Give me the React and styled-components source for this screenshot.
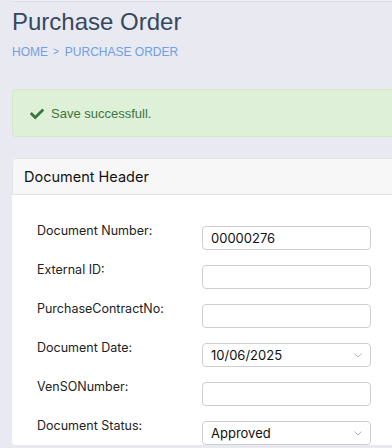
import React from "react"
import styled, { createGlobalStyle } from "styled-components"
import { FaCheck } from "react-icons/fa"

const GlobalStyle = createGlobalStyle`
  html, body {
    margin: 0;
    padding: 0;
    background: #e9e9f2;
    overflow: hidden;
  }
  * {
    box-sizing: border-box;
  }
`

const Page = styled.div`
  width: 440px;
  padding-left: 12px;
  font-family: "Liberation Sans", Arial, sans-serif;
`

const TopStrip = styled.div`
  height: 2px;
  margin-left: 1px;
  background: #f1f1f6;
  border-bottom: 1px solid #dcdce4;
  border-bottom-left-radius: 4px;
`

const Title = styled.h1`
  margin: 6px 0 0;
  font-size: 24px;
  line-height: 28px;
  font-weight: 400;
  color: #34495e;
`

const Breadcrumb = styled.div`
  margin-top: 8px;
  display: flex;
  align-items: center;
  font-size: 12px;
  line-height: 16px;
  color: #6fa0e2;
  text-transform: uppercase;
`

const Crumb = styled.span``

const Separator = styled.span`
  font-size: 10px;
  margin: 0 6px 0 5px;
`

const Alert = styled.div`
  margin-top: 29px;
  height: 48px;
  display: flex;
  align-items: center;
  gap: 7px;
  padding-left: 17px;
  background: #dff0d8;
  border: 1px solid #d3e8c4;
  border-radius: 4px;
  color: #3c763d;
  font-size: 13px;

  svg {
    margin-top: 1px;
  }
`

const Card = styled.div`
  margin-top: 21px;
  background: #fff;
  border-radius: 4px;
  overflow: hidden;
`

const CardHeader = styled.div`
  height: 37px;
  display: flex;
  align-items: center;
  padding-left: 11px;
  background: #f7f7f7;
  border: 1px solid #e2e2e2;
  border-radius: 4px 4px 0 0;
  font-family: Inter, "Noto Sans", sans-serif;
  font-size: 14.5px;
  color: #111;
`

const CardBody = styled.div`
  padding: 31px 0 0 25px;
  display: flex;
  flex-direction: column;
  gap: 15px;
`

const Row = styled.div`
  display: grid;
  grid-template-columns: 165px 169px;
  align-items: start;
`

const Label = styled.label`
  margin-top: -4px;
  font-family: Inter, "Noto Sans", sans-serif;
  font-size: 12.5px;
  line-height: 18px;
  color: #222;
`

const Field = styled.div`
  position: relative;
  height: 24px;
  display: flex;
  align-items: center;
  padding: 0 8px;
  border: 1px solid #cfcfcf;
  border-radius: 4px;
  background: #fff;
  font-family: Inter, "Noto Sans", sans-serif;
  font-size: 13px;
  color: #111;
`

const Chevron = styled.svg`
  position: absolute;
  right: 8px;
  top: 9px;
`

const fields = [
  { label: "Document Number:", value: "00000276" },
  { label: "External ID:", value: "" },
  { label: "PurchaseContractNo:", value: "" },
  { label: "Document Date:", value: "10/06/2025", select: true },
  { label: "VenSONumber:", value: "" },
  { label: "Document Status:", value: "Approved", select: true },
]

const App = () => {
  return (
    <>
      <GlobalStyle />
      <Page>
        <TopStrip />
        <Title>Purchase Order</Title>
        <Breadcrumb>
          <Crumb>Home</Crumb>
          <Separator>&gt;</Separator>
          <Crumb>Purchase Order</Crumb>
        </Breadcrumb>
        <Alert>
          <FaCheck size={14} />
          <span>Save successfull.</span>
        </Alert>
        <Card>
          <CardHeader>Document Header</CardHeader>
          <CardBody>
            {fields.map(f => (
              <Row key={f.label}>
                <Label>{f.label}</Label>
                <Field>
                  {f.value}
                  {f.select && (
                    <Chevron width="8" height="5" viewBox="0 0 8 5">
                      <path d="M0.5 0.5 L4 4 L7.5 0.5" fill="none" stroke="#b5b5b5" strokeWidth="1" />
                    </Chevron>
                  )}
                </Field>
              </Row>
            ))}
          </CardBody>
        </Card>
      </Page>
    </>
  )
}

export default App
